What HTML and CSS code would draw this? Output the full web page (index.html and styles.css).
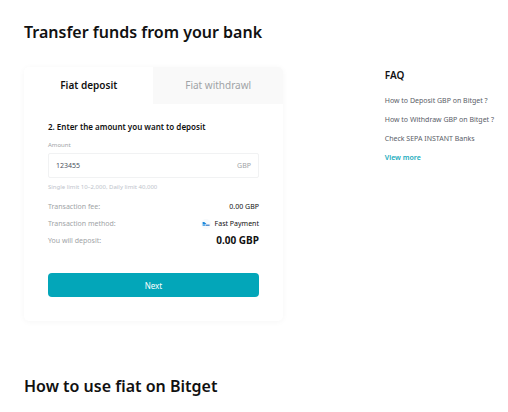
FILE: index.html
```html
<!DOCTYPE html>
<html lang="en">
<head>
<meta charset="utf-8">
<meta name="viewport" content="width=device-width, initial-scale=1">
<title>Transfer funds from your bank</title>
<link rel="stylesheet" href="styles.css">
</head>
<body>
<main class="page">
  <h1 class="heading">Transfer funds from your bank</h1>
  <div class="columns">
    <section class="card">
      <div class="tabs" role="tablist">
        <button class="tab tab-active" type="button" role="tab" aria-selected="true">Fiat deposit</button>
        <button class="tab" type="button" role="tab" aria-selected="false">Fiat withdrawl</button>
      </div>
      <form class="form">
        <h2 class="step">2. Enter the amount you want to deposit</h2>
        <label class="label" for="amount">Amount</label>
        <div class="field">
          <input class="amount" id="amount" type="text" inputmode="decimal" value="123455">
          <span class="currency">GBP</span>
        </div>
        <p class="limit">Single limit 10–2,000, Daily limit 40,000</p>
        <dl class="summary">
          <div class="row"><dt>Transaction fee:</dt><dd>0.00 GBP</dd></div>
          <div class="row"><dt>Transaction method:</dt><dd class="method"><svg class="logo" viewBox="0 0 10 10" aria-hidden="true"><circle cx="5" cy="5" r="5" fill="#f8fafc"/><path d="M1.6 3h1.6l2.2 1.8-1.6.7H1.6z" fill="#1686dc"/><path d="M1.6 5.5h2.6V7H1.6z" fill="#58acec"/><path d="M4.6 5.5h4V7h-4z" fill="#5992cf"/></svg>Fast Payment</dd></div>
          <div class="row"><dt>You will deposit:</dt><dd class="total">0.00 GBP</dd></div>
        </dl>
        <button class="next" type="button">Next</button>
      </form>
    </section>
    <aside class="faq">
      <h2 class="faq-title">FAQ</h2>
      <a class="faq-link" href="#">How to Deposit GBP on Bitget ?</a>
      <a class="faq-link" href="#">How to Withdraw GBP on Bitget ?</a>
      <a class="faq-link" href="#">Check SEPA INSTANT Banks</a>
      <a class="faq-link faq-more" href="#">View more</a>
    </aside>
  </div>
  <h2 class="heading">How to use fiat on Bitget</h2>
</main>
</body>
</html>
```
FILE: styles.css
```css
* {
  box-sizing: border-box;
}

body {
  margin: 0;
  background: #fff;
  color: #111;
  font-family: "Noto Sans", sans-serif;
  font-size: 7px;
  line-height: 17px;
}

h1, h2, p, dl, dd {
  margin: 0;
}

button, input {
  font: inherit;
}

.page {
  padding: 20px 0 12px 24px;
}

.heading {
  font-size: 16px;
  font-weight: 600;
  line-height: 24px;
}

.columns {
  display: flex;
  justify-content: space-between;
  align-items: flex-start;
  margin: 23px 0 53px;
}

.card {
  flex: 0 0 auto;
  width: 53.5%;
  border-radius: 5px;
  box-shadow: 0 1px 6px rgba(0, 0, 0, 0.04);
  overflow: hidden;
}

.tabs {
  display: grid;
  grid-template-columns: 1fr 1fr;
}

.tab {
  height: 37px;
  padding: 0;
  border: 0;
  background: #f9f9f9;
  color: #a0a3a6;
  font-size: 10px;
}

.tab-active {
  background: #fff;
  color: #111;
  font-weight: 600;
}

.form {
  display: flex;
  flex-direction: column;
  padding: 16px 24px 24px;
}

.step {
  font-size: 8px;
  font-weight: 600;
  line-height: 14px;
}

.label {
  padding: 6px 0 3px;
  color: #a0a3a6;
  font-size: 6px;
  line-height: 10px;
}

.field {
  display: flex;
  align-items: center;
  height: 25px;
  padding: 0 7px;
  border: 1px solid #f1f2f3;
  border-radius: 2px;
}

.amount {
  flex: 1;
  min-width: 0;
  padding: 0;
  border: 0;
  outline: 0;
  background: none;
  color: #4c5160;
}

.currency {
  color: #a0a3a6;
}

.limit {
  padding: 4px 0 5px;
  color: #bdc3cb;
  font-size: 6px;
  line-height: 11px;
}

.row {
  display: flex;
  justify-content: space-between;
}

.row dt {
  color: #a0a3a6;
}

.method {
  display: flex;
  align-items: center;
  gap: 4px;
}

.logo {
  width: 10px;
  height: 10px;
}

.row .total {
  font-size: 10px;
  font-weight: 700;
}

.next {
  height: 24px;
  margin-top: 24px;
  padding: 0;
  border: 0;
  border-radius: 4px;
  background: #03a6b9;
  color: #fff;
  font-size: 8px;
}

.faq {
  display: flex;
  flex-direction: column;
  flex: 0 0 auto;
  padding-right: 14px;
}

.faq-title {
  margin-bottom: 7px;
  font-size: 10px;
  font-weight: 600;
}

.faq-link {
  color: #5a5e68;
  line-height: 19px;
  text-decoration: none;
  white-space: nowrap;
}

.faq-more {
  color: #20acbd;
  font-weight: 600;
}
```
